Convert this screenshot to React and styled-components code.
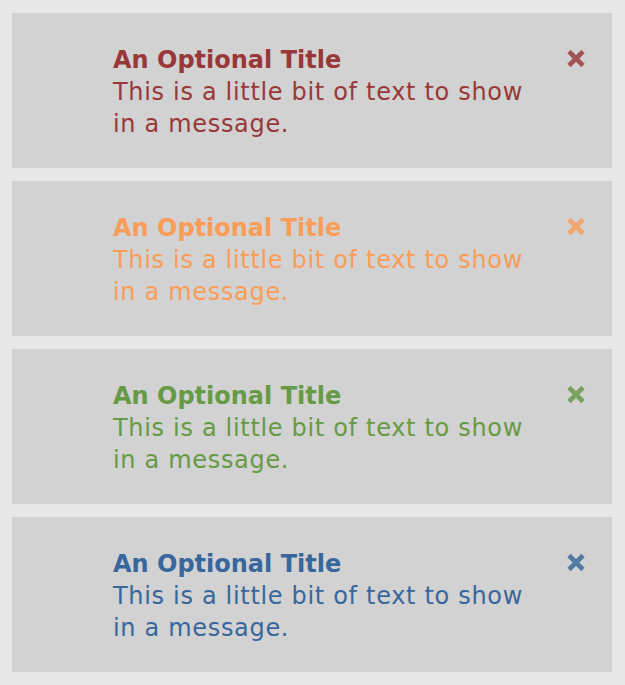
import React from "react";
import styled, { createGlobalStyle } from "styled-components";

const GlobalStyle = createGlobalStyle`
  html, body {
    margin: 0;
    padding: 0;
    background: #e7e7e7;
  }
  body {
    font-family: "DejaVu Sans", "Liberation Sans", sans-serif;
  }
`;

const Page = styled.div`
  display: flex;
  flex-direction: column;
  gap: 13px;
  padding: 13px 13px 13px 12px;
`;

const Card = styled.div`
  display: flex;
  align-items: flex-start;
  background: #d2d2d2;
  padding: 31px 26px 28px 101px;
  color: ${(p) => p.$color};
`;

const Content = styled.div`
  flex: 1;
  max-width: 436px;
  font-size: 24px;
  line-height: 32px;
`;

const Title = styled.div`
  font-weight: bold;
`;

const Body = styled.div`
  letter-spacing: 0.68px;
`;

const Close = styled.button`
  margin-left: auto;
  margin-top: 5px;
  padding: 0;
  border: 0;
  background: none;
  width: 20px;
  height: 19px;
  color: inherit;
  opacity: 0.82;
  cursor: pointer;
  display: flex;
  svg {
    display: block;
  }
`;

const messages = [
  { color: "#993838" },
  { color: "#f99d58" },
  { color: "#679a44" },
  { color: "#37679c" },
];

function XIcon() {
  return (
    <svg width="20" height="19" viewBox="0 0 20 19">
      <path
        d="M3 2.5 L17 16.5 M17 2.5 L3 16.5"
        stroke="currentColor"
        strokeWidth="4.6"
        strokeLinecap="butt"
      />
    </svg>
  );
}

export default function App() {
  return (
    <>
      <GlobalStyle />
      <Page>
        {messages.map((m, i) => (
          <Card key={i} $color={m.color}>
            <Content>
              <Title>An Optional Title</Title>
              <Body>This is a little bit of text to show in a message.</Body>
            </Content>
            <Close aria-label="Close">
              <XIcon />
            </Close>
          </Card>
        ))}
      </Page>
    </>
  );
}
